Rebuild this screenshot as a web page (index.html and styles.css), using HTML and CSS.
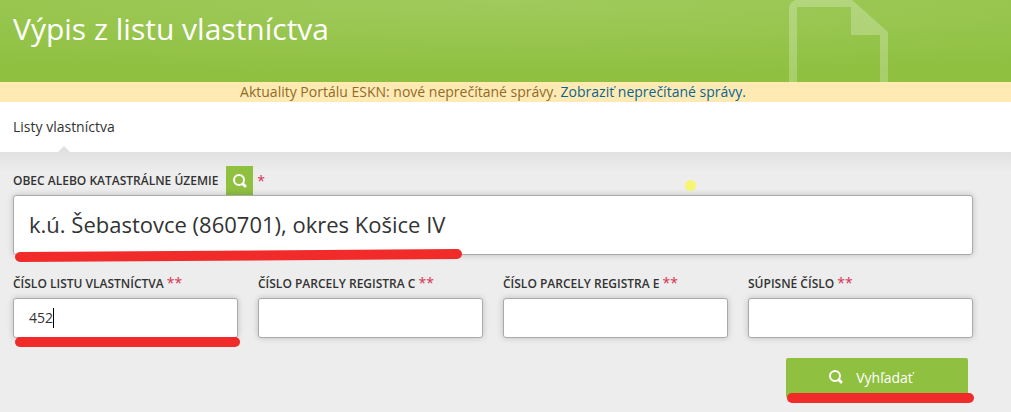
FILE: index.html
```html
<!DOCTYPE html>
<html lang="sk">
<head>
    <meta charset="UTF-8">
    <meta name="viewport" content="width=device-width, initial-scale=1.0">
    <title>Výpis z listu vlastníctva</title>
    <link rel="stylesheet" href="styles.css">
</head>
<body>
    <header class="header">
        <h1 class="title">Výpis z listu vlastníctva</h1>
        <svg class="header-icon" width="100" height="82" viewBox="0 0 100 82" aria-hidden="true">
            <path fill-rule="evenodd" d="M0 82V8Q0 3 6 0H63L99 32V82H91V35H62V7H8V82Z"/>
        </svg>
    </header>

    <div class="notice">
        Aktuality Portálu ESKN: nové neprečítané správy. <a href="#">Zobraziť neprečítané správy.</a>
    </div>

    <nav class="tabs">
        <a class="tab" href="#">Listy vlastníctva</a>
    </nav>

    <!-- Search form -->
    <main class="content">
        <form class="search-form">
            <div class="field">
                <div class="label-row">
                    <label for="obec">OBEC ALEBO KATASTRÁLNE ÚZEMIE</label>
                    <button class="lookup" type="button" aria-label="Hľadať">
                        <svg width="14" height="14" viewBox="0 0 14 14" aria-hidden="true">
                            <circle cx="6" cy="6" r="5"/>
                            <path d="M10 10L12 12"/>
                        </svg>
                    </button>
                    <span class="required">*</span>
                </div>
                <div class="marked">
                    <input class="input-large" type="text" id="obec" value="k.ú. Šebastovce (860701), okres Košice IV">
                    <svg class="mark mark-obec" width="450" height="14" viewBox="0 0 450 14" aria-hidden="true">
                        <path d="M6 9L443 6"/>
                    </svg>
                </div>
                <span class="pointer-dot"></span>
            </div>

            <div class="columns">
                <div class="field">
                    <label class="label" for="list">ČÍSLO LISTU VLASTNÍCTVA <span class="required">**</span></label>
                    <div class="marked">
                        <input type="text" id="list" value="452">
                        <span class="caret"></span>
                        <span class="mark mark-list"></span>
                    </div>
                </div>
                <div class="field">
                    <label class="label" for="parcelaC">ČÍSLO PARCELY REGISTRA C <span class="required">**</span></label>
                    <input type="text" id="parcelaC">
                </div>
                <div class="field">
                    <label class="label" for="parcelaE">ČÍSLO PARCELY REGISTRA E <span class="required">**</span></label>
                    <input type="text" id="parcelaE">
                </div>
                <div class="field">
                    <label class="label" for="supisne">SÚPISNÉ ČÍSLO <span class="required">**</span></label>
                    <input type="text" id="supisne">
                </div>
            </div>

            <div class="actions">
                <div class="marked">
                    <button class="submit" type="submit">
                        <svg width="14" height="14" viewBox="0 0 14 14" aria-hidden="true">
                            <circle cx="6" cy="6" r="5"/>
                            <path d="M10 10L12 12"/>
                        </svg>
                        Vyhľadať
                    </button>
                    <span class="mark mark-submit"></span>
                </div>
            </div>
        </form>
    </main>
</body>
</html>
```

FILE: styles.css
```css
* {
    box-sizing: border-box;
}

body {
    font-family: "Open Sans", "Noto Sans", sans-serif;
    font-size: 14px;
    line-height: 20px;
    margin: 0;
    color: #333;
    background-color: #ededed;
}

.header {
    display: flex;
    justify-content: space-between;
    align-items: flex-start;
    height: 82px;
    padding: 0 122px 0 13px;
    background: radial-gradient(100% 90% at 50% 0, #a0cb5d, #8fc040);
}

.title {
    margin: 9px 0 0;
    font-size: 30px;
    font-weight: 400;
    line-height: 40px;
    color: #fff;
}

.header-icon {
    fill: rgba(255, 255, 255, 0.24);
}

.notice {
    padding: 0 38px 0 13px;
    text-align: center;
    color: #8f6b2a;
    background-color: #ffeab3;
}

.notice a {
    color: #0b6490;
    text-decoration: none;
}

.tabs {
    display: flex;
    padding: 0 13px;
    background-color: #fff;
}

.tab {
    position: relative;
    line-height: 50px;
    color: #333;
    text-decoration: none;
}

.tab::after {
    content: "";
    position: absolute;
    left: 50%;
    bottom: 0;
    margin-left: -6px;
    border: 6px solid transparent;
    border-top: 0;
    border-bottom-color: #e0e0e0;
}

.content {
    padding: 14px 38px 14px 13px;
    background: linear-gradient(#e1e1e1, #ededed 20px);
}

.field {
    position: relative;
}

.label-row {
    display: flex;
    align-items: center;
    gap: 4px;
    font-size: 12px;
    font-weight: 600;
}

.label {
    display: block;
    margin-bottom: 4px;
    font-size: 12px;
    font-weight: 600;
}

.required {
    font-size: 14px;
    font-weight: 400;
    line-height: 16px;
    color: #d9304f;
}

button {
    font-family: inherit;
    color: #fff;
    background-color: #8fc040;
    border: none;
    cursor: pointer;
}

button svg {
    fill: none;
    stroke: #fff;
    stroke-width: 2;
}

button path {
    stroke-width: 3;
    stroke-linecap: round;
}

.lookup {
    display: flex;
    align-items: center;
    justify-content: center;
    width: 27px;
    height: 29px;
    margin-left: 4px;
    padding: 0;
}

input {
    display: block;
    width: 100%;
    height: 40px;
    padding: 0 15px 2px;
    font-family: inherit;
    font-size: 14px;
    color: #333;
    background-color: #fff;
    border: 1px solid #aaa;
    border-radius: 3px;
    box-shadow: 0 0 6px rgba(0, 0, 0, 0.2);
}

.input-large {
    height: 60px;
    font-size: 22px;
}

.columns {
    display: grid;
    grid-template-columns: repeat(4, 1fr);
    gap: 20px;
    margin-top: 19px;
}

.actions {
    display: flex;
    justify-content: flex-end;
    margin-top: 20px;
    padding-right: 5px;
}

.submit {
    display: flex;
    align-items: center;
    justify-content: center;
    gap: 13px;
    width: 182px;
    height: 40px;
    padding: 0 16px 2px 4px;
    font-size: 14px;
    border-radius: 2px;
}

/* Hand-drawn highlights over the fields */
.marked {
    position: relative;
}

.mark {
    position: absolute;
    height: 10px;
    border-radius: 5px;
    background-color: #f12a2a;
}

.mark-obec {
    left: 1px;
    bottom: -7px;
    height: 14px;
    background: none;
    stroke: #f12a2a;
    stroke-width: 10;
    stroke-linecap: round;
}

.mark-list {
    left: 2px;
    right: -2px;
    bottom: -9px;
}

.mark-submit {
    left: 1px;
    right: -6px;
    bottom: -5px;
}

.caret {
    position: absolute;
    left: 40px;
    top: 10px;
    width: 1px;
    height: 20px;
    background-color: #000;
}

.pointer-dot {
    position: absolute;
    left: 70%;
    top: 14px;
    width: 11px;
    height: 11px;
    border-radius: 50%;
    background-color: #f7f571;
}
```
